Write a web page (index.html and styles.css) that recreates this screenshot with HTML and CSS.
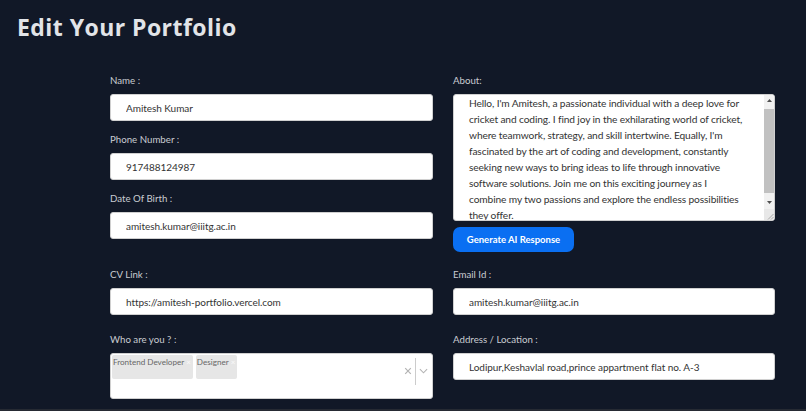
FILE: index.html
```html
<!DOCTYPE html>
<html lang="en">
<head>
<meta charset="utf-8">
<title>Edit Your Portfolio</title>
<link rel="stylesheet" href="styles.css">
</head>
<body>
<h1 class="title">Edit Your Portfolio</h1>
<form class="form">
  <div class="col">
    <div class="field">
      <label class="label">Name :</label>
      <input class="input" type="text" value="Amitesh Kumar">
    </div>
    <div class="field">
      <label class="label">Phone Number :</label>
      <input class="input" type="text" value="917488124987">
    </div>
    <div class="field">
      <label class="label">Date Of Birth :</label>
      <input class="input" type="text" value="amitesh.kumar@iiitg.ac.in">
    </div>
  </div>
  <div class="col">
    <div class="field">
      <label class="label">About:</label>
      <div class="about">
        <div class="about-text">Hello, I'm Amitesh, a passionate individual with a deep love for cricket and coding. I find joy in the exhilarating world of cricket, where teamwork, strategy, and skill intertwine. Equally, I'm fascinated by the art of coding and development, constantly seeking new ways to bring ideas to life through innovative software solutions. Join me on this exciting journey as I combine my two passions and explore the endless possibilities they offer.</div>
        <div class="scrollbar">
          <div class="sb-btn sb-up"><svg width="5" height="3" viewBox="0 0 5 3"><polygon points="0,3 2.5,0 5,3" fill="#505050"/></svg></div>
          <div class="sb-track"><div class="sb-thumb"></div></div>
          <div class="sb-btn sb-down"><svg width="5" height="3" viewBox="0 0 5 3"><polygon points="0,0 2.5,3 5,0" fill="#505050"/></svg></div>
          <div class="sb-corner"><svg width="8" height="8" viewBox="0 0 8 8"><path d="M7.5 2 L2 7.5 M7.5 5 L5 7.5" stroke="#9a9a9a" stroke-width="0.8" fill="none"/></svg></div>
        </div>
      </div>
      <button class="btn" type="button">Generate AI Response</button>
    </div>
  </div>
  <div class="field row2">
    <label class="label">CV Link :</label>
    <input class="input" type="text" value="https://amitesh-portfolio.vercel.com">
  </div>
  <div class="field row2">
    <label class="label">Email Id :</label>
    <input class="input" type="text" value="amitesh.kumar@iiitg.ac.in">
  </div>
  <div class="field">
    <label class="label">Who are you ? :</label>
    <div class="select">
      <div class="tags">
        <span class="tag">Frontend Developer<span class="tag-x">×</span></span>
        <span class="tag">Designer<span class="tag-x">×</span></span>
      </div>
      <div class="indicators">
        <span class="clear">
          <svg width="8" height="8" viewBox="0 0 10 10"><path d="M1.5 1.5 L8.5 8.5 M8.5 1.5 L1.5 8.5" stroke="#b3b3b3" stroke-width="1.5" fill="none"/></svg>
        </span>
        <span class="sep"></span>
        <span class="chev">
          <svg width="9" height="6" viewBox="0 0 10 6"><path d="M1 1 L5 5 L9 1" stroke="#b3b3b3" stroke-width="1.2" fill="none"/></svg>
        </span>
      </div>
    </div>
  </div>
  <div class="field">
    <label class="label">Address / Location :</label>
    <input class="input" type="text" value="Lodipur,Keshavlal road,prince appartment flat no. A-3">
  </div>
</form>
</body>
</html>
```
FILE: styles.css
```css
html, body {
  margin: 0;
  padding: 0;
}
body {
  background: #111827;
  font-family: "Lato", "Noto Sans", sans-serif;
  height: 411px;
  overflow: hidden;
  box-sizing: border-box;
  border-bottom: 2px solid #262a33;
}
.title {
  margin: 0;
  padding: 12px 0 0 17px;
  font-family: "Open Sans", "Noto Sans", sans-serif;
  font-size: 23px;
  line-height: 30px;
  font-weight: 700;
  color: #e2e4e8;
  letter-spacing: 0.45px;
}
.form {
  display: grid;
  grid-template-columns: 323px 322px;
  column-gap: 20px;
  row-gap: 18px;
  margin: 32px 0 0 110px;
}
.col {
  display: flex;
  flex-direction: column;
  gap: 12px;
}
.row2 {
  margin-top: -2px;
}
.field {
  display: flex;
  flex-direction: column;
}
.label {
  font-size: 9.7px;
  line-height: 13px;
  color: #c9ccd2;
  margin-bottom: 7px;
}
.input {
  box-sizing: border-box;
  height: 27px;
  width: 100%;
  border: 1px solid #d0d0d0;
  border-radius: 3px;
  background: #fff;
  padding: 0 15px;
  font-family: inherit;
  font-size: 10px;
  letter-spacing: -0.05px;
  color: #333;
  outline: none;
}
.about {
  box-sizing: border-box;
  width: 100%;
  height: 127px;
  border: 1px solid #d0d0d0;
  border-radius: 3px;
  background: #fff;
  display: flex;
  overflow: hidden;
}
.about-text {
  flex: 1;
  padding: 0 19px 0 15px;
  font-size: 10.2px;
  letter-spacing: -0.12px;
  line-height: 16px;
  color: #333;
  overflow: hidden;
}
.scrollbar {
  width: 10px;
  display: flex;
  flex-direction: column;
  background: #f1f1f1;
}
.sb-btn {
  display: flex;
  align-items: center;
  justify-content: center;
}
.sb-up { height: 11px; }
.sb-down { height: 13px; }
.sb-track {
  flex: 1;
  display: flex;
  flex-direction: column;
  padding: 3px 0 3px;
}
.sb-thumb {
  flex: 1;
  background: #c1c1c1;
}
.sb-corner {
  height: 11px;
  display: flex;
  align-items: flex-end;
  justify-content: flex-end;
  background: #e8e8e8;
}
.btn {
  margin-top: 6px;
  align-self: flex-start;
  width: 121px;
  height: 25px;
  border: none;
  border-radius: 7px;
  background: #0a6ff2;
  color: #fff;
  font-family: inherit;
  font-size: 9.5px;
  font-weight: 700;
  padding: 0;
}
.select {
  box-sizing: border-box;
  height: 46px;
  background: #fff;
  border: 1px solid #d0d0d0;
  border-radius: 3px;
  display: flex;
  align-items: flex-start;
}
.tags {
  flex: 1;
  display: flex;
  gap: 3px;
  padding: 1px;
}
.tag {
  height: 24px;
  box-sizing: border-box;
  background: #e6e6e6;
  color: #666;
  font-size: 8.1px;
  line-height: 12px;
  padding: 1px 0 0 1px;
  display: flex;
  align-items: flex-start;
  border-radius: 2px;
  white-space: nowrap;
}
.tag-x {
  color: #fafafa;
  font-size: 8px;
  margin: 0 2px 0 2px;
}
.indicators {
  display: flex;
  align-items: center;
  height: 32px;
  margin-top: 1px;
}
.clear {
  display: flex;
  padding: 0 3px 0 4px;
}
.sep {
  width: 1px;
  height: 27px;
  background: #ccc;
}
.chev {
  display: flex;
  padding: 0 4px 0 3px;
}
```
